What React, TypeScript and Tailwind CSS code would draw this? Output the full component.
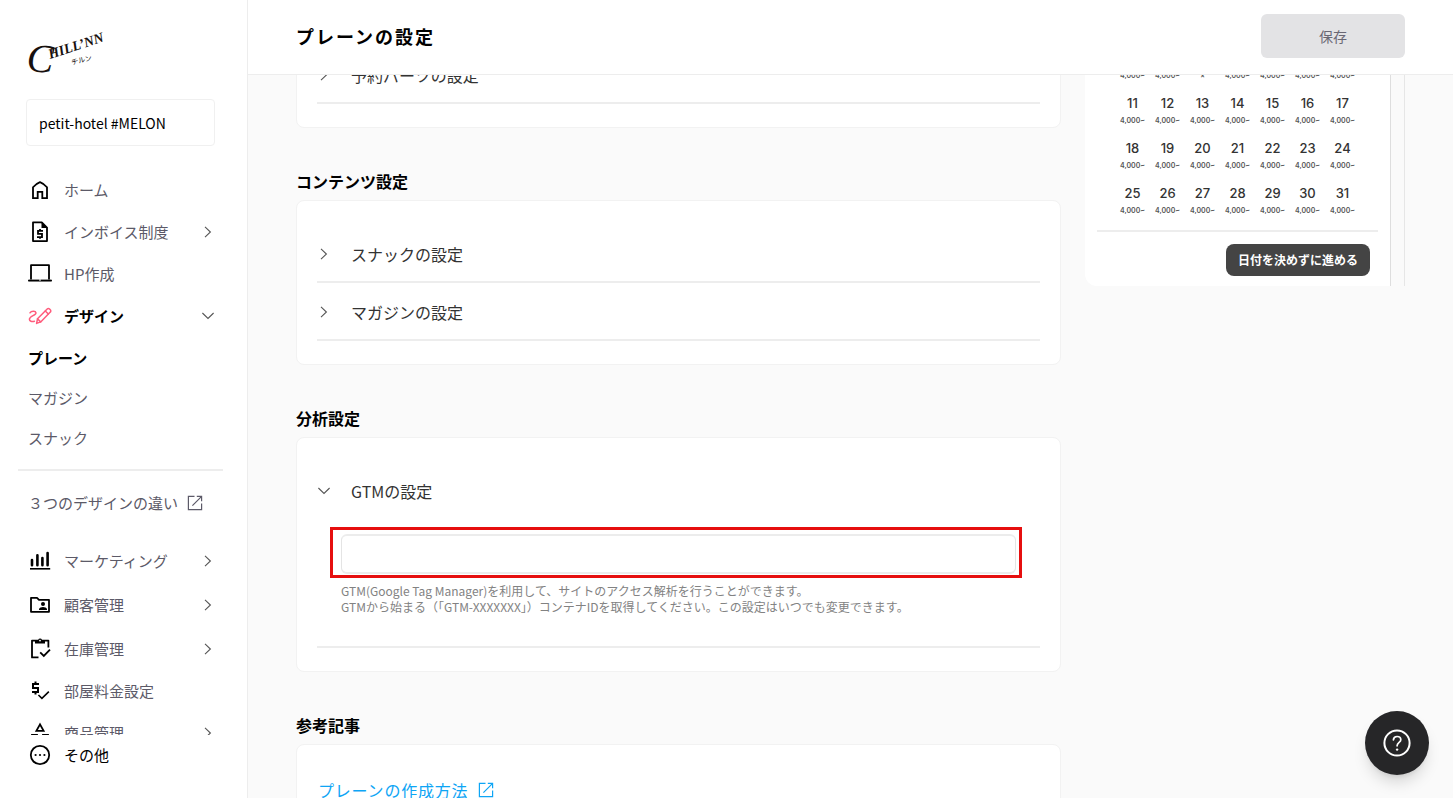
import { useState } from 'react'
import type { ReactNode } from 'react'
import clsx from 'clsx'

// ─── Icons ───────────────────────────────────────────────────────────────────
function Icon({ children, className = 'w-6 h-6' }: { children: ReactNode; className?: string }) {
  return (
    <svg
      viewBox="0 0 24 24"
      className={clsx('shrink-0', className)}
      fill="none"
      stroke="currentColor"
      strokeWidth={1.8}
      aria-hidden
    >
      {children}
    </svg>
  )
}

const icons = {
  home: <path d="M5 20.1V9.3Q8 5.6 12 4.1q4 1.5 7 5.2v10.8h-4.7v-6.3H9.7v6.3z" />,
  invoice: (
    <>
      <path d="M5 2.4h8.8L19 7.6v13.5H5z" strokeLinejoin="round" />
      <path d="M13.5 2v6H19.5z" fill="currentColor" stroke="none" />
      <path d="M15 10.8H10v3.1h4v3.2H9M12 9v1.8M12 17v1.8" />
    </>
  ),
  laptop: (
    <>
      <path d="M3 17.5V3.2h18v14.3" strokeLinejoin="round" />
      <path d="M0.4 18h23.2v1.1H0.4z" fill="currentColor" strokeWidth={0.8} />
      <path d="M11 18h2" stroke="#fff" strokeWidth={1} />
    </>
  ),
  design: (
    <g strokeWidth={1.5} strokeLinecap="round" strokeLinejoin="round">
      <path d="M2 8.8C3.2 7 7.6 6.6 8 8.8c.4 2.4-6.6 3.4-6.6 6.4 0 2 2.4 2.8 5 2" />
      <path d="M8.6 19.4l.9-4.6L19.2 5a1.6 1.6 0 0 1 2.3 0l.8.8a1.6 1.6 0 0 1 0 2.3l-9.6 9.8z" />
      <path d="M17.3 7l3 3M9.5 14.8l3.1 3.1" />
    </g>
  ),
  chart: (
    <>
      <path d="M4 11v5.2M9.4 6.2v10M14.4 9v7.2M19.6 4v12.2" strokeWidth={2.6} strokeLinecap="round" />
      <path d="M2 19.8h20.2" strokeWidth={1.6} />
    </>
  ),
  folder: (
    <>
      <path d="M3 4.8h6l2 2h10v12H3z" strokeLinejoin="round" />
      <circle cx="15" cy="11" r="2" fill="currentColor" stroke="none" />
      <path d="M11 17v-.8c0-1.4 2.6-2.2 4-2.2s4 .8 4 2.2v.8z" fill="currentColor" stroke="none" />
    </>
  ),
  stock: (
    <>
      <path d="M10.5 20.4H4V3.6h16.4v7" strokeLinejoin="round" />
      <path d="M7 3h3.2a2 2 0 0 1 3.8 0H17v3.4H7z" fill="currentColor" stroke="none" />
      <circle cx="12" cy="3.6" r="0.9" fill="#fff" stroke="none" />
      <path d="M12.2 15.4l3.6 3.6 6.2-6.4" />
    </>
  ),
  price: (
    <path
      d="M11 13V8H6V6h5V4H8.5V2.6h-2V4H4v6h5v2H4v2h2.5v1.4h2V14H11zM21.4 13.2l-7.5 7.4-4-4.1 1.1-1.1 2.9 2.9 6.4-6.3z"
      fill="currentColor"
      stroke="none"
    />
  ),
  category: (
    <>
      <path d="M12 3.4L8.4 9.8h7.2z" />
      <path d="M4 14h5v6H4zM15 14h5v6h-5z" />
    </>
  ),
  more: (
    <>
      <circle cx="12" cy="12" r="9.2" />
      <circle cx="7.6" cy="12" r="1.1" fill="currentColor" stroke="none" />
      <circle cx="12" cy="12" r="1.1" fill="currentColor" stroke="none" />
      <circle cx="16.4" cy="12" r="1.1" fill="currentColor" stroke="none" />
    </>
  ),
}

type IconName = keyof typeof icons

function Chevron({ down = false }: { down?: boolean }) {
  return (
    <svg viewBox="0 0 16 16" className="w-4 h-4 shrink-0" fill="none" stroke="#555" strokeWidth={1.1} aria-hidden>
      <path d={down ? 'M2.4 5l5.6 5.4L13.6 5' : 'M5 2.8l5.4 5.2L5 13.2'} />
    </svg>
  )
}

function ExternalIcon() {
  return (
    <svg viewBox="0 0 16 16" className="w-4 h-4 shrink-0" fill="none" stroke="currentColor" strokeWidth={1.2} aria-hidden>
      <path d="M7.5 1.4H1.4v13.2h13.2V8.5M9.8 1.4h4.8v4.8M14.4 1.6L5.4 10.6" />
    </svg>
  )
}

function Logo() {
  return (
    <svg viewBox="0 0 72 46" className="w-[72px] h-[46px] overflow-visible" role="img" aria-label="CHILL'NN" fill="#17100e">
      <g fontFamily="'Liberation Serif', serif" fontStyle="italic">
        <text x="-1" y="42" fontSize="40" transform="rotate(4 0 42)">C</text>
        <text x="23" y="30" fontSize="14" fontWeight="700" transform="rotate(-18 23 30)">HILL’NN</text>
      </g>
      <text x="45" y="36" fontSize="7" fontFamily="'Noto Sans CJK JP', sans-serif" transform="rotate(-14 45 36)">
        チルン
      </text>
    </svg>
  )
}

// ─── Sidebar ─────────────────────────────────────────────────────────────────
interface NavItem {
  label: string
  icon: IconName
  height: string
  arrow?: 'right' | 'down'
}

const mainNav: NavItem[] = [
  { label: 'ホーム', icon: 'home', height: 'h-[42px]' },
  { label: 'インボイス制度', icon: 'invoice', height: 'h-[42px]', arrow: 'right' },
  { label: 'HP作成', icon: 'laptop', height: 'h-[42px]' },
  { label: 'デザイン', icon: 'design', height: 'h-[42px]', arrow: 'down' },
]

const designNav = ['プレーン', 'マガジン', 'スナック']

const manageNav: NavItem[] = [
  { label: 'マーケティング', icon: 'chart', height: 'h-11', arrow: 'right' },
  { label: '顧客管理', icon: 'folder', height: 'h-11', arrow: 'right' },
  { label: '在庫管理', icon: 'stock', height: 'h-11', arrow: 'right' },
  { label: '部屋料金設定', icon: 'price', height: 'h-10' },
  { label: '商品管理', icon: 'category', height: 'h-11', arrow: 'right' },
]

function NavRow({ item }: { item: NavItem }) {
  const active = item.arrow === 'down'
  return (
    <li>
      <a href="#" className={clsx('flex items-center gap-3 pl-7 pr-[31px]', item.height)}>
        <Icon className={clsx('w-6 h-6', active ? 'text-[#ff5c7c]' : 'text-black')}>{icons[item.icon]}</Icon>
        <span className={clsx('flex-1', active && 'font-bold text-black')}>{item.label}</span>
        {item.arrow && <Chevron down={active} />}
      </a>
    </li>
  )
}

function Sidebar() {
  return (
    <aside className="flex flex-col w-[248px] shrink-0 border-r border-[#ededed] bg-white text-[15px] leading-6 text-[#5c5a68]">
      <div className="pl-[27px] pt-[29px]">
        <Logo />
      </div>
      <button className="ml-[26px] mr-8 mt-6 h-[47px] shrink-0 rounded-sm border border-[#f0f0f0] px-3 text-left text-sm text-black">
        petit-hotel #MELON
      </button>

      <nav className="flex-1 min-h-0 overflow-hidden pt-[23px]" aria-label="メニュー">
        <ul>
          {mainNav.map(item => <NavRow key={item.label} item={item} />)}
        </ul>
        <ul className="mt-px">
          {designNav.map((label, i) => (
            <li key={label}>
              <a href="#" className={clsx('flex items-center h-10 pl-7', i === 0 && 'font-bold text-black')}>
                {label}
              </a>
            </li>
          ))}
        </ul>
        <hr className="ml-[18px] mr-6 mt-[11px] border-t-2 border-[#ededed]" />
        <a href="#" className="flex items-center gap-[9px] pl-7 mt-3 h-10">
          ３つのデザインの違い
          <ExternalIcon />
        </a>
        <ul className="mt-4">
          {manageNav.map(item => <NavRow key={item.label} item={item} />)}
        </ul>
      </nav>

      <a href="#" className="flex items-center gap-3 h-10 mb-[23px] pl-7 text-black">
        <Icon>{icons.more}</Icon>
        その他
      </a>
    </aside>
  )
}

// ─── Settings cards ──────────────────────────────────────────────────────────
function Card({ title, children }: { title?: string; children: ReactNode }) {
  return (
    <section className="mb-10">
      {title && <h2 className="mb-1.5 text-base leading-[26px] font-bold text-black">{title}</h2>}
      <div className="rounded-lg border border-[#f2f2f2] bg-white px-5 pt-6 pb-[23px]">{children}</div>
    </section>
  )
}

function SettingRow({ label, children }: { label: string; children?: ReactNode }) {
  return (
    <div className="border-b-2 border-[#ededed]">
      <button className="flex items-center gap-[19px] h-14 w-full -ml-px pt-0.5 text-left text-base leading-6 text-[#333]" aria-expanded={!!children}>
        <Chevron down={!!children} />
        {label}
      </button>
      {children}
    </div>
  )
}

function GtmField() {
  const [gtmId, setGtmId] = useState('')
  return (
    <div className="pt-[9px] pb-[31px]">
      <div className="ml-[13px] mr-[18px] border-[3px] border-[#e60f0f] pt-1 pr-[3px] pb-px pl-2">
        <input
          type="text"
          aria-label="GTMの設定"
          aria-describedby="gtm-help"
          value={gtmId}
          onChange={e => setGtmId(e.target.value)}
          className="block w-full h-10 rounded-md border border-y-2 border-[#e4e4e4] border-y-[#ececec] bg-white px-3 text-base outline-none"
        />
      </div>
      <p id="gtm-help" className="mt-[5px] pl-6 text-xs leading-4 text-[#828282]">
        GTM(Google Tag Manager)を利用して、サイトのアクセス解析を行うことができます。
        <br />
        GTMから始まる（「GTM-XXXXXXX」）コンテナIDを取得してください。この設定はいつでも変更できます。
      </p>
    </div>
  )
}

// ─── Booking preview ─────────────────────────────────────────────────────────
const weeks = [4, 11, 18, 25].map(start => Array.from({ length: 7 }, (_, i) => start + i))
const closedDay = 6

function Preview() {
  return (
    <aside className="w-80 shrink-0 self-start border-r border-[#e6e6e6]" aria-label="プレビュー">
      <div className="mr-[13px] rounded-bl-xl border-r border-[#dedede] bg-white px-3 pt-[27px] pb-[10px]">
        <div className="px-[18px]">
          <table className="w-full table-fixed font-['Inter',sans-serif] text-center">
            <tbody>
              {weeks.map(week => (
                <tr key={week[0]} className="h-[45px]">
                  {week.map(day => (
                    <td key={day} className="p-0 align-top">
                      <div className="text-[13px] leading-5 font-medium text-[#333]">{day}</div>
                      <div className="text-[7px] leading-4 font-semibold text-[#555]">{day === closedDay ? '×' : '4,000~'}</div>
                    </td>
                  ))}
                </tr>
              ))}
            </tbody>
          </table>
        </div>
        <hr className="mt-0.5 border-t-2 border-[#ededed]" />
        <div className="flex justify-end mt-3 pr-2">
          <button className="w-36 h-8 rounded-lg bg-[#444] text-xs font-bold text-white">日付を決めずに進める</button>
        </div>
      </div>
    </aside>
  )
}

export default function App() {
  return (
    <div className="flex h-screen overflow-hidden bg-[#fafafa] font-['Noto_Sans_CJK_JP',sans-serif]">
      <Sidebar />

      <div className="flex flex-col flex-1 min-w-0">
        <header className="relative z-10 flex items-center justify-between h-[75px] shrink-0 border-b border-[#ededed] bg-white px-12 pb-[2px]">
          <h1 className="text-lg leading-7 font-bold tracking-[2px] text-black">プレーンの設定</h1>
          <button className="w-36 h-11 rounded-md bg-[#e3e3e5] text-sm text-[#6a6874]">保存</button>
        </header>

        <div className="flex-1 min-h-0 overflow-hidden">
          {/* Scrolled part way down, so the first rows sit under the header */}
          <main className="flex gap-6 px-12 -mt-[54px]">
            <div className="flex-1 min-w-0">
              <Card>
                <SettingRow label="予約パーツの設定" />
              </Card>
              <Card title="コンテンツ設定">
                <SettingRow label="スナックの設定" />
                <SettingRow label="マガジンの設定" />
              </Card>
              <Card title="分析設定">
                <SettingRow label="GTMの設定">
                  <GtmField />
                </SettingRow>
              </Card>
              <Card title="参考記事">
                <a href="#" className="inline-flex items-center gap-[10px] pl-px pt-[9px] pb-2 text-base leading-6 tracking-wider text-[#0ea5f5]">
                  プレーンの作成方法
                  <ExternalIcon />
                </a>
              </Card>
            </div>
            <Preview />
          </main>
        </div>
      </div>

      <button
        className="fixed right-6 bottom-[23px] z-20 flex items-center justify-center w-16 h-16 rounded-full bg-[#262628] text-white shadow-lg shadow-black/15"
        aria-label="ヘルプ"
      >
        <svg viewBox="0 0 28 28" className="w-7 h-7" fill="none" stroke="currentColor" strokeLinecap="round" aria-hidden>
          <circle cx="14" cy="14" r="12.6" strokeWidth={2} />
          <path d="M10.4 10.8c.2-2 1.7-3.3 3.7-3.3s3.7 1.3 3.7 3.3c0 2.6-3.7 2.8-3.7 6" strokeWidth={1.7} />
          <circle cx="14.1" cy="20.6" r="1.2" fill="currentColor" stroke="none" />
        </svg>
      </button>
    </div>
  )
}
